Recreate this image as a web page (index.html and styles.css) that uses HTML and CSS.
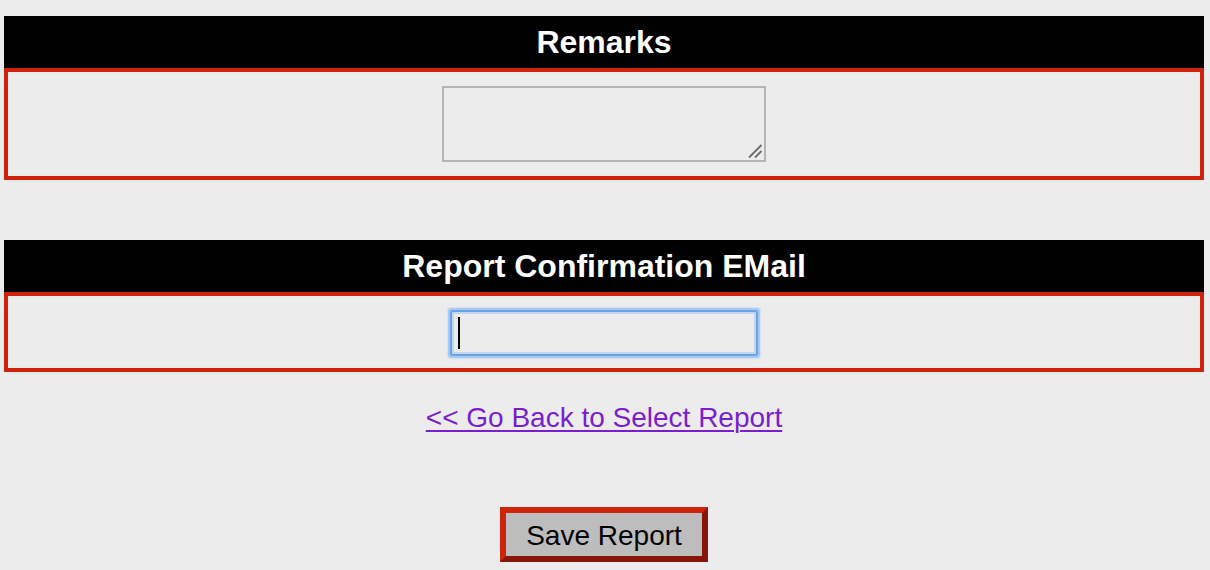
FILE: index.html
```html
<!DOCTYPE html>
<html>
<head>
<meta charset="utf-8">
<title>Report</title>
<link rel="stylesheet" href="styles.css">
</head>
<body>
<div class="page">
  <section class="panel">
    <div class="panel-head">Remarks</div>
    <div class="panel-body remarks-body">
      <span class="area-wrap">
        <textarea class="remarks"></textarea>
        <svg class="grip" width="16" height="16" viewBox="0 0 16 16" aria-hidden="true">
          <line x1="14.5" y1="2" x2="2" y2="14.5" stroke="#6a6a6a" stroke-width="1.8"/>
          <line x1="14.5" y1="8" x2="8" y2="14.5" stroke="#6a6a6a" stroke-width="1.8"/>
        </svg>
      </span>
    </div>
  </section>
  <section class="panel second">
    <div class="panel-head">Report Confirmation EMail</div>
    <div class="panel-body email-body">
      <span class="field-wrap">
        <input class="email" type="text">
        <span class="caret"></span>
      </span>
    </div>
  </section>
  <div class="back-row">
    <a class="back-link" href="#">&lt;&lt; Go Back to Select Report</a>
  </div>
  <div class="save-row">
    <button class="save-btn" type="button">Save Report</button>
  </div>
</div>
</body>
</html>
```

FILE: styles.css
```css
html, body {
  margin: 0;
  padding: 0;
  background: #ececec;
  font-family: "Liberation Sans", Arial, Helvetica, sans-serif;
}
.page {
  width: 1200px;
  margin: 0 4px;
  padding-top: 16px;
  display: flex;
  flex-direction: column;
}
.panel.second {
  margin-top: 60px;
}
.panel-head {
  background: #000;
  color: #fff;
  font-weight: bold;
  font-size: 32px;
  height: 52px;
  line-height: 52px;
  text-align: center;
}
.panel-body {
  border: 4px solid #cf240b;
  display: flex;
  justify-content: center;
  align-items: center;
}
.remarks-body {
  height: 104px;
}
.email-body {
  height: 72px;
}
.area-wrap {
  position: relative;
  display: block;
  width: 324px;
  height: 76px;
}
.remarks {
  box-sizing: border-box;
  display: block;
  width: 324px;
  height: 76px;
  border: 2px solid #b4b4b4;
  background: #ececec;
  margin: 0;
  padding: 2px;
  resize: none;
  outline: none;
}
.grip {
  position: absolute;
  right: 3px;
  bottom: 3px;
}
.field-wrap {
  position: relative;
  display: inline-block;
  margin-top: 2px;
}
.email {
  box-sizing: border-box;
  width: 304px;
  height: 42px;
  border: 2px solid #c2d6ee;
  background: #ececec;
  margin: 0;
  padding: 0 6px;
  outline: none;
  border-radius: 1px;
  box-shadow: 0 0 0 2px #6aa4e8, 0 0 0 4px #a9c9f0, 0 0 1px 5px #d3e2f4;
  display: block;
}
.caret {
  position: absolute;
  left: 6px;
  top: 5px;
  width: 2px;
  height: 32px;
  background: #000;
}
.back-row {
  margin-top: 30px;
  text-align: center;
}
.back-link {
  font-size: 28px;
  color: #7a1ed0;
  text-decoration: underline;
  text-decoration-thickness: 2px;
  text-underline-offset: 3px;
}
.save-row {
  margin-top: 73px;
  text-align: center;
}
.save-btn {
  box-sizing: border-box;
  width: 208px;
  height: 55px;
  border-width: 6px;
  border-style: solid;
  border-color: #cf240b #861608 #861608 #cf240b;
  background: #bdbdbd;
  color: #000;
  font-family: "Liberation Sans", Arial, Helvetica, sans-serif;
  font-size: 28px;
  padding: 3px 0 0 0;
  margin: 0;
}
```
